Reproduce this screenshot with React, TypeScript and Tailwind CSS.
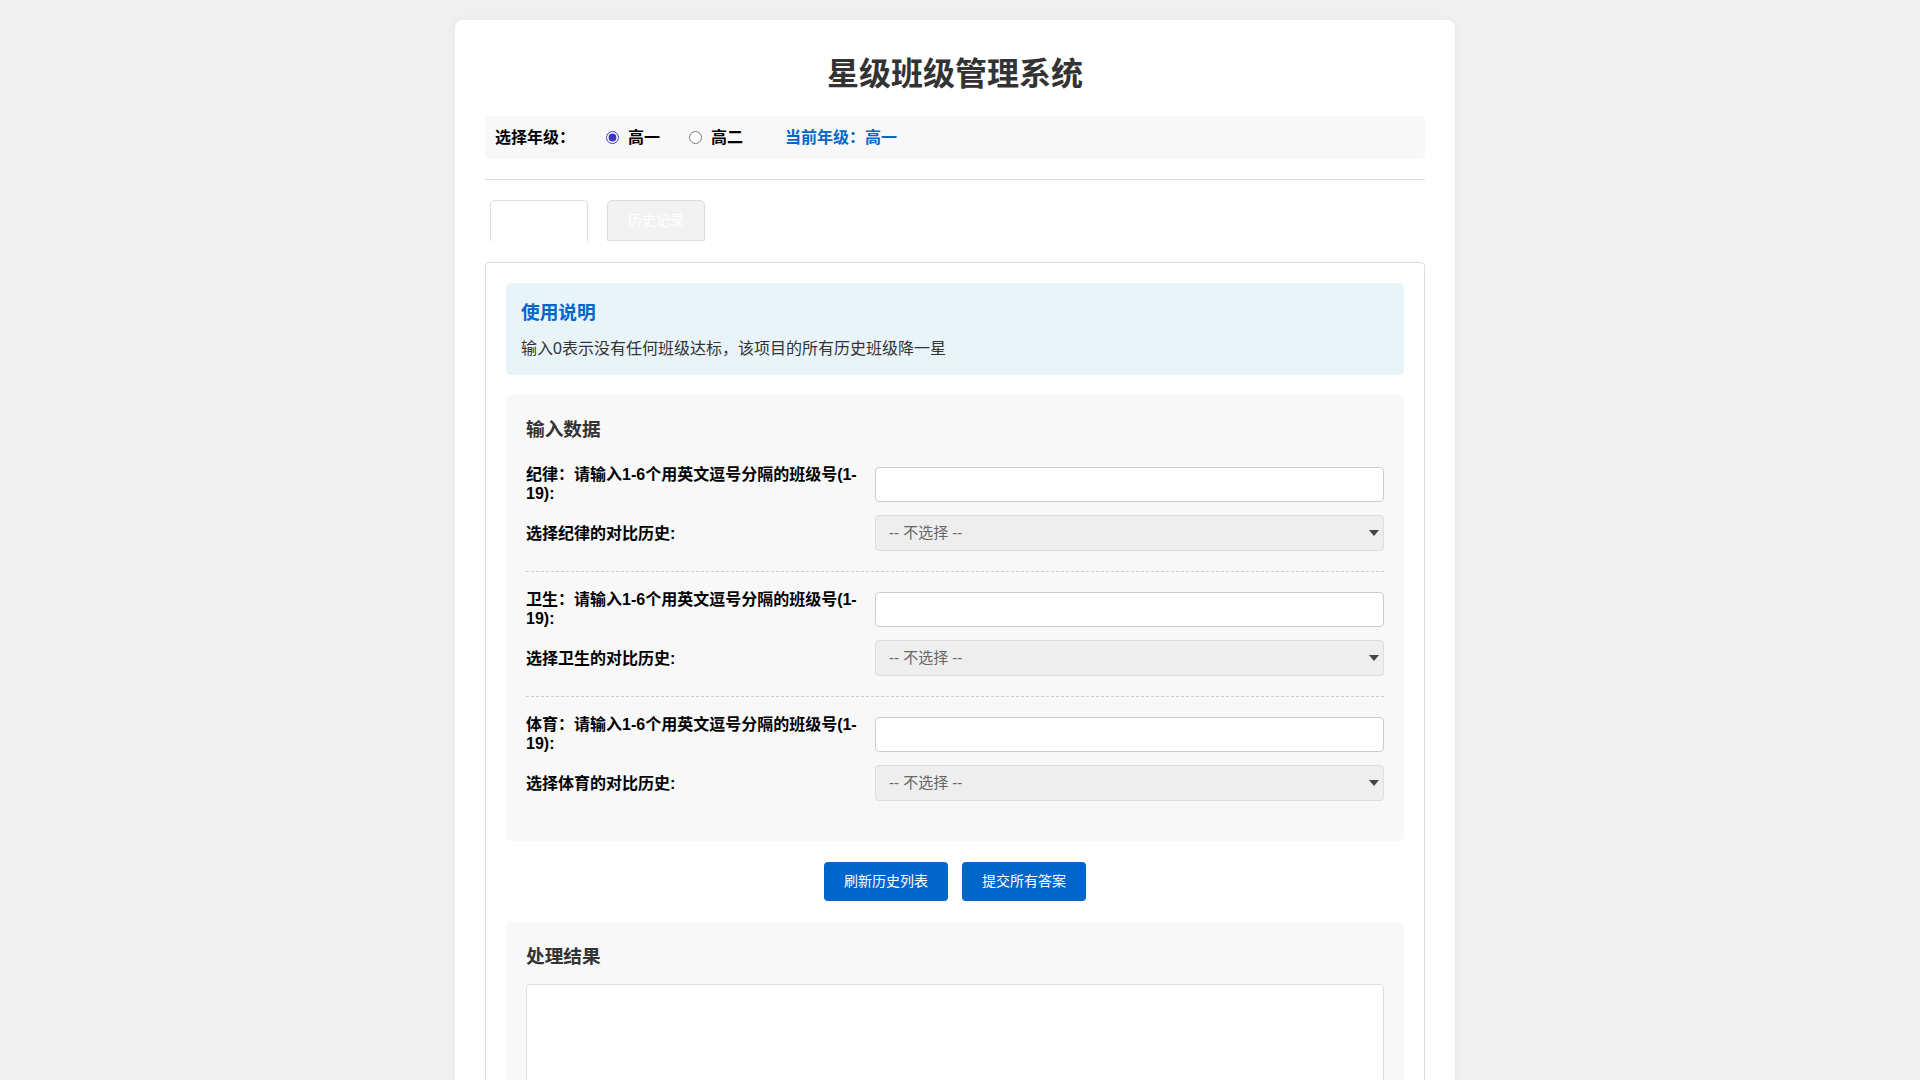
import React, { useState } from "react";

const font = "font-['Liberation_Sans','Noto_Sans_CJK_SC',sans-serif]";

type Item = { name: string };

const items: Item[] = [{ name: "纪律" }, { name: "卫生" }, { name: "体育" }];

function SelectBox() {
  return (
    <div className="relative flex-1">
      <select
        defaultValue=""
        className="w-full h-[36px] appearance-none bg-[#eee] border border-[#ddd] rounded-[4px] pl-[13px] pr-8 text-[15px] text-[#666] outline-none"
      >
        <option value="">-- 不选择 --</option>
      </select>
      <svg
        className="pointer-events-none absolute right-[5px] top-[15px]"
        width="10"
        height="6"
        viewBox="0 0 10 6"
      >
        <path d="M0 0 L10 0 L5 6 Z" fill="#444" />
      </svg>
    </div>
  );
}

export default function App() {
  const [grade, setGrade] = useState("高一");

  return (
    <main className={`min-h-screen bg-[#f0f0f0] pt-[20px] pb-[20px] pr-[10px] ${font} text-[#333]`}>
      <div className="mx-auto w-[1000px] bg-white rounded-[8px] shadow-[0_0_10px_rgba(0,0,0,0.05)] px-[30px] pt-[36px] pb-[30px]">
        {/* Title */}
        <h1 className="text-center text-[32px] font-bold leading-[37px] mb-[23px] text-[#333]">
          星级班级管理系统
        </h1>

        {/* Grade bar */}
        <div className="flex items-center bg-[#f8f8f8] rounded-[5px] px-[10px] py-[10px] text-[16px] leading-[23px] text-black">
          <span className="font-bold mr-[31px]">选择年级：</span>
          <label className="flex items-center font-bold mr-[29px]">
            <input
              type="radio"
              name="grade"
              checked={grade === "高一"}
              onChange={() => setGrade("高一")}
              className="w-[13px] h-[13px] mr-[9px] accent-[#3a36c8]"
            />
            高一
          </label>
          <label className="flex items-center font-bold mr-[42px]">
            <input
              type="radio"
              name="grade"
              checked={grade === "高二"}
              onChange={() => setGrade("高二")}
              className="w-[13px] h-[13px] mr-[9px] accent-[#3a36c8]"
            />
            高二
          </label>
          <span className="font-bold text-[#0066cc]">当前年级：{grade}</span>
        </div>

        <hr className="my-[20px] border-0 border-t border-[#ddd]" />

        {/* Tabs */}
        <div className="flex gap-[19px] ml-[5px] mb-[21px]">
          <div className="w-[98px] h-[41px] bg-white border border-b-0 border-[#ddd] rounded-t-[5px] flex items-center justify-center text-[14px] text-white">
            提交答案
          </div>
          <div className="w-[98px] h-[41px] bg-[#f2f2f2] border border-[#ddd] rounded-t-[5px] flex items-center justify-center text-[14px] text-white">
            历史记录
          </div>
        </div>

        {/* Panel */}
        <div className="border border-[#ddd] rounded-[4px] p-[20px]">
          <div className="bg-[#e8f4f8] rounded-[5px] pt-[16px] pb-[15px] px-[15px]">
            <h3 className="text-[18.7px] font-bold leading-[27px] text-[#0066cc] mb-[11px]">使用说明</h3>
            <p className="text-[16px] leading-[23px] text-[#333]">
              输入0表示没有任何班级达标，该项目的所有历史班级降一星
            </p>
          </div>

          <div className="mt-[20px] bg-[#f8f8f8] rounded-[5px] p-[20px]">
            <h3 className="text-[18.7px] font-bold leading-[30px] text-[#333] mb-[20px]">输入数据</h3>
            {items.map((it, i) => (
              <div
                key={it.name}
                className={
                  i < items.length - 1
                    ? "pb-[20px] mb-[18px] border-b border-dashed border-[#ccc]"
                    : "pb-[20px]"
                }
              >
                <div className="flex items-center mb-[12px]">
                  <label className="w-[340px] shrink-0 mr-[9px] text-[16px] font-bold leading-[19px] text-black">
                    {it.name}：请输入1-6个用英文逗号分隔的班级号(1-19):
                  </label>
                  <input
                    type="text"
                    className="flex-1 h-[35px] bg-white border border-[#ccc] rounded-[4px] px-[10px] text-[15px] outline-none"
                  />
                </div>
                <div className="flex items-center">
                  <label className="w-[340px] shrink-0 mr-[9px] text-[16px] font-bold leading-[19px] text-black">
                    选择{it.name}的对比历史:
                  </label>
                  <SelectBox />
                </div>
              </div>
            ))}
          </div>

          {/* Buttons */}
          <div className="flex justify-center gap-[14px] mt-[21px]">
            <button className="h-[39px] px-[20px] bg-[#0066cc] text-white text-[14px] rounded-[4px]">
              刷新历史列表
            </button>
            <button className="h-[39px] px-[20px] bg-[#0066cc] text-white text-[14px] rounded-[4px]">
              提交所有答案
            </button>
          </div>

          {/* Result */}
          <div className="mt-[21px] bg-[#f8f8f8] rounded-[5px] p-[20px]">
            <h3 className="text-[18.7px] font-bold leading-[30px] text-[#333] mb-[12px]">处理结果</h3>
            <textarea
              readOnly
              className="block w-full h-[300px] bg-white border border-[#ddd] rounded-[4px] p-[10px] text-[14px] resize-none outline-none"
            />
          </div>
        </div>
      </div>
    </main>
  );
}
